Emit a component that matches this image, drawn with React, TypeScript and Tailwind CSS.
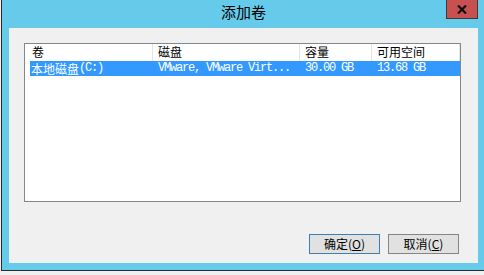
const cjk = '"Noto Sans CJK SC", "Liberation Sans", sans-serif'
const mono = 'font-["Liberation_Mono",monospace] text-[12px] tracking-[-1.2px]'

const columns = [
  { title: '卷', width: 'w-[128px]' },
  { title: '磁盘', width: 'w-[147px]' },
  { title: '容量', width: 'w-[72px]' },
  { title: '可用空间', width: 'w-[88px]' },
]

function Button({ label, hotkey, primary }: { label: string; hotkey: string; primary?: boolean }) {
  return (
    <button
      className={`w-[71px] h-[20px] flex items-center justify-center bg-[#e1e1e1] border text-[12px] text-black leading-none ${
        primary ? 'border-[#3c7fb1]' : 'border-[#858585]'
      }`}
      style={{ fontFamily: cjk }}
    >
      {label}(<span className="underline">{hotkey}</span>)
    </button>
  )
}

export default function App() {
  return (
    <div className="w-[484px] h-[275px] overflow-hidden bg-[#f0f0f0]">
      <div className="ml-[1px] w-[500px] h-[271px] bg-[#66cbea] border-l border-b border-[#2b2b2b] flex flex-col">
        {/* title bar */}
        <div className="h-[27px] flex items-start">
          <div className="ml-[219px] mt-[3px] text-[15px] leading-[18px] text-black" style={{ fontFamily: cjk }}>
            添加卷
          </div>
          <div className="ml-[180px] w-[32px] h-[19px] bg-[#c75050] border border-t-0 border-[#3b3b3b] flex items-center justify-center">
            <svg width="10" height="9" viewBox="0 0 10 9">
              <path d="M1 0.5 L9 8.5 M9 0.5 L1 8.5" stroke="#111" strokeWidth="2.2" />
            </svg>
          </div>
        </div>

        {/* client area */}
        <div className="ml-[7px] mt-[1px] w-[469px] h-[235px] bg-[#f0f0f0] flex flex-col">
          <div className="ml-[15px] mt-[15px] w-[437px] h-[159px] bg-white border border-[#828790] flex flex-col">
            <div className="h-[17px] flex">
              {columns.map((c, i) => (
                <div
                  key={c.title}
                  className={`${c.width} h-full border-r border-[#e5e5e5] text-[12px] leading-[16px] text-black ${
                    i === 0 ? 'pl-[7px]' : 'pl-[5px]'
                  }`}
                  style={{ fontFamily: cjk }}
                >
                  {c.title}
                </div>
              ))}
            </div>
            <div className="ml-[5px] w-[430px] h-[15px] bg-[#3399ff] flex items-center text-white leading-[15px]">
              <div className="w-[123px] pl-[1px] text-[12px] flex items-center" style={{ fontFamily: cjk }}>
                本地磁盘
                <span className={mono}>(C:)</span>
              </div>
              <div className={`w-[147px] pl-[5px] whitespace-nowrap ${mono}`}>VMware, VMware Virt...</div>
              <div className={`w-[72px] pl-[5px] ${mono}`}>30.00 GB</div>
              <div className={`w-[88px] pl-[5px] ${mono}`}>13.68 GB</div>
            </div>
          </div>

          <div className="mt-[32px] mr-[19px] flex justify-end gap-[8px]">
            <Button label="确定" hotkey="O" primary />
            <Button label="取消" hotkey="C" />
          </div>
        </div>
      </div>
    </div>
  )
}
